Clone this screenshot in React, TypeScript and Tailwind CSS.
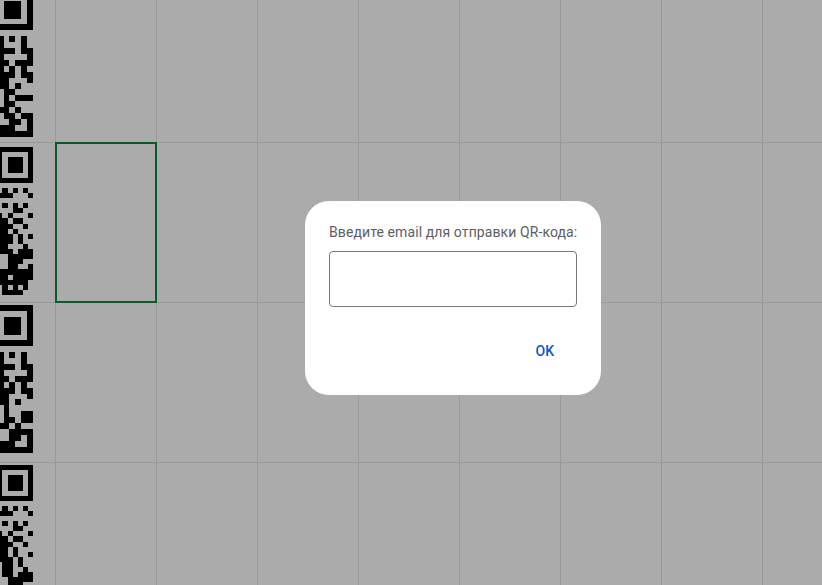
const CODE_A = [
  "101010","100010","111011","100001","110111","101010","111011","110001","110100",
  "011000","010111","011000","110100","011011","001101","111001","111111",
];
const CODE_B = [
  "101010","100010","111011","100001","110111","101010","111011","110001","110100",
  "010000","010011","011011","110100","001111","001101","111001","111111",
];
const CODE_C = [
  "0101010","1110001","0000000","0101010","0001100","1010001","1101100","1110010","1101000",
  "1110101","1110100","1100010","1110111","0011111","0011100","0011001","1111111",
  "1101111","1111110","0101010","0111100",
];
const CODE_D = [
  "0101010","1110001","0000000","0101010","0001100","1010001","1101100","1110010","1101000",
  "1101001","1110100","0110100","0110010","0110111","0011111","0011100","0011001",
];

const COLS = ["col-a", "col-b", "col-c", "col-d", "col-e", "col-f", "col-g", "col-h"];
const ROWS = ["row-1", "row-2", "row-3", "row-4"];

function Qr({ top, size, rows }: { top: number; size: number; rows: string[] }) {
  const right = 33;
  const left = right - size * 7;
  return (
    <g fill="#000">
      <path
        fillRule="evenodd"
        d={`M${left} ${top}h${size * 7}v${size * 7}h${-size * 7}z M${left + size} ${top + size}v${size * 5}h${size * 5}v${-size * 5}z`}
      />
      <rect x={left + size * 2} y={top + size * 2} width={size * 3} height={size * 3} />
      {rows.map((row, r) =>
        row.split("").map((bit, c) =>
          bit === "1" ? (
            <rect
              key={`${r}-${c}`}
              x={right - size * (row.length - c)}
              y={top + size * (8 + r)}
              width={size}
              height={size}
            />
          ) : null,
        ),
      )}
    </g>
  );
}

export default function App() {
  return (
    <div className="relative h-[585px] w-[822px] overflow-hidden bg-[#ababab] font-['Roboto',sans-serif]">
      <div className="grid grid-cols-[56px_repeat(8,101px)] grid-rows-[143px_160px_160px_160px]">
        {ROWS.map((row, r) => (
          <div key={row} className="contents">
            <div className="border-r border-b border-[#999999]" />
            {COLS.map((col, c) => (
              <div
                key={col}
                className={
                  r === 1 && c === 0
                    ? "-mt-px -ml-px border-2 border-[#0b5a2b]"
                    : "border-r border-b border-[#999999]"
                }
              />
            ))}
          </div>
        ))}
      </div>

      <svg className="absolute top-0 left-0" width="34" height="585" shapeRendering="crispEdges">
        <Qr top={-11} size={5.9} rows={CODE_A} />
        <Qr top={147} size={5.1} rows={CODE_C} />
        <Qr top={305} size={5.9} rows={CODE_B} />
        <Qr top={465} size={5.1} rows={CODE_D} />
      </svg>

      <div className="absolute top-[201px] left-[305px] flex h-[194px] w-[296px] flex-col rounded-3xl bg-white px-6 pt-[21px]">
        <p className="text-sm leading-5 tracking-[0.1px] whitespace-nowrap text-[#5b5e62]">Введите email для отправки QR-кода:</p>
        <div className="mt-[9px] h-14 rounded border border-[#777777]" />
        <div className="mt-[34px] flex justify-end pr-[23px]">
          <span className="text-sm leading-5 font-medium text-[#0b57d0]">OK</span>
        </div>
      </div>
    </div>
  );
}
